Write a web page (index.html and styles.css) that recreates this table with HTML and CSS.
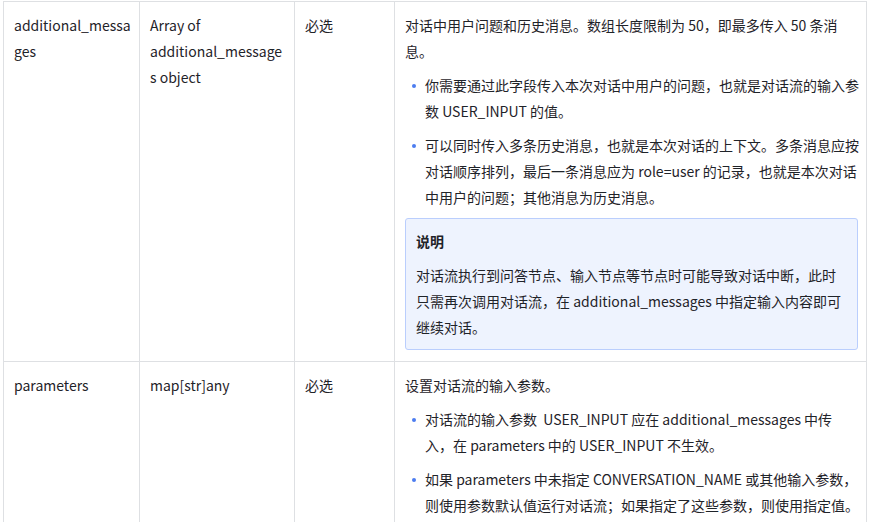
FILE: index.html
```html
<!DOCTYPE html>
<html lang="zh-CN">
<head>
    <meta charset="UTF-8">
    <meta name="viewport" content="width=device-width, initial-scale=1.0">
    <title>参数说明</title>
    <link rel="stylesheet" href="styles.css">
</head>
<body>
    <div class="container">
        <table class="params">
            <colgroup>
                <col class="col-name">
                <col class="col-type">
                <col class="col-required">
                <col class="col-desc">
            </colgroup>
            <tbody>
                <tr>
                    <td>additional_messages</td>
                    <td>Array of additional_messages object</td>
                    <td>必选</td>
                    <td>
                        <p>对话中用户问题和历史消息。数组长度限制为 50，即最多传入 50 条消息。</p>
                        <ul>
                            <li>你需要通过此字段传入本次对话中用户的问题，也就是对话流的输入参数 USER_INPUT 的值。</li>
                            <li>可以同时传入多条历史消息，也就是本次对话的上下文。多条消息应按对话顺序排列，最后一条消息应为 role=user 的记录，也就是本次对话中用户的问题；其他消息为历史消息。</li>
                        </ul>
                        <div class="note">
                            <div class="note-title">说明</div>
                            <div class="note-body">对话流执行到问答节点、输入节点等节点时可能导致对话中断，此时只需再次调用对话流，在 additional_messages 中指定输入内容即可继续对话。</div>
                        </div>
                    </td>
                </tr>
                <tr>
                    <td>parameters</td>
                    <td>map[str]any</td>
                    <td>必选</td>
                    <td>
                        <p>设置对话流的输入参数。</p>
                        <ul>
                            <li>对话流的输入参数&nbsp; USER_INPUT 应在 additional_messages 中传入，在 parameters 中的 USER_INPUT 不生效。</li>
                            <li>如果 parameters 中未指定 CONVERSATION_NAME 或其他输入参数，则使用参数默认值运行对话流；如果指定了这些参数，则使用指定值。</li>
                        </ul>
                    </td>
                </tr>
            </tbody>
        </table>
    </div>
</body>
</html>
```

FILE: styles.css
```css
body {
    margin: 0;
    background-color: #ffffff;
    font-family: "Noto Sans CJK SC", "Noto Sans", sans-serif;
    font-size: 14px;
    line-height: 26px;
    color: #1f2329;
}

.container {
    padding: 1px 4px 0 3px;
}

.params {
    width: 864px;
    border-collapse: collapse;
    table-layout: fixed;
}

.col-name { width: 136px; }
.col-type { width: 155px; }
.col-required { width: 100px; }

.params td {
    border: 1px solid #dee0e3;
    padding: 10px 8px 11px 10px;
    vertical-align: top;
    overflow-wrap: break-word;
}

.params p {
    margin: 0;
}

.params ul {
    list-style: none;
    margin: 8px -1px 0 0;
    padding: 0 0 0 20px;
}

.params li {
    position: relative;
    margin-top: 8px;
}

.params li:first-child {
    margin-top: 0;
}

.params li::before {
    content: "";
    position: absolute;
    left: -13px;
    top: 12px;
    width: 4px;
    height: 4px;
    border-radius: 50%;
    background-color: #4c7df0;
}

.note {
    margin-top: 8px;
    padding: 9px 10px;
    background-color: #eef3fe;
    border: 1px solid #bacefd;
    border-radius: 3px;
}

.note-title {
    font-weight: bold;
    margin-bottom: 8px;
}
```
